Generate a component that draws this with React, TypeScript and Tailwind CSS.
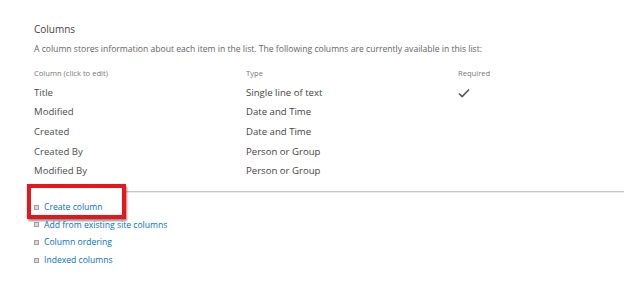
const rows = [
  { name: "Title", type: "Single line of text", required: true },
  { name: "Modified", type: "Date and Time", required: false },
  { name: "Created", type: "Date and Time", required: false },
  { name: "Created By", type: "Person or Group", required: false },
  { name: "Modified By", type: "Person or Group", required: false },
];

const links = [
  "Create column",
  "Add from existing site columns",
  "Column ordering",
  "Indexed columns",
];

function Bullet() {
  return (
    <span className="w-[5px] h-[5px] border border-[#a0a0a0] bg-[#d8d8d8] mr-[5px] shrink-0" />
  );
}

export default function App() {
  return (
    <div className="w-[624px] h-[284px] bg-white overflow-hidden font-['Open_Sans',sans-serif] pt-[21px]">
      <div className="pl-[34px] text-[10px] leading-[16px] text-[#444]">Columns</div>
      <div className="pl-[34px] mt-[6px] text-[8.6px] leading-[12px] text-[#666] whitespace-nowrap">
        A column stores information about each item in the list. The following columns are currently available in this list:
      </div>

      <div className="mt-[10px] pl-[34px] grid grid-cols-[212px_212px_1fr] text-[#777] text-[7.6px] leading-[16px]">
        <div>Column (click to edit)</div>
        <div>Type</div>
        <div>Required</div>
      </div>

      <div className="pl-[34px] mt-[2px]">
        {rows.map((r) => (
          <div
            key={r.name}
            className="grid grid-cols-[212px_212px_1fr] h-[19.7px] items-center text-[9.6px] text-[#4d4d4d]"
          >
            <span>{r.name}</span>
            <span className="text-[#444]">{r.type}</span>
            <span>
              {r.required && (
                <svg width="12" height="10" viewBox="0 0 12 10" className="block">
                  <path d="M1 5.5 L4.2 8.5 L11 1.5" fill="none" stroke="#555" strokeWidth="1.7" />
                </svg>
              )}
            </span>
          </div>
        ))}
      </div>

      <div className="relative mt-[10px] ml-[34px]">
        <div className="h-[2px] border-t border-[#c8c8c8] bg-[#ededed]" />
        <div className="absolute left-[-7px] top-[-7px] w-[99px] h-[35px] border-[4px] border-[#e8151b] bg-white shadow-[1px_2px_2px_rgba(0,0,0,0.45)]" />
        <ul className="relative pt-[5px]">
          {links.map((l) => (
            <li key={l} className="flex items-center h-[17.7px] text-[8.6px] text-[#0072c6]">
              <Bullet />
              <span>{l}</span>
            </li>
          ))}
        </ul>
      </div>
    </div>
  );
}
